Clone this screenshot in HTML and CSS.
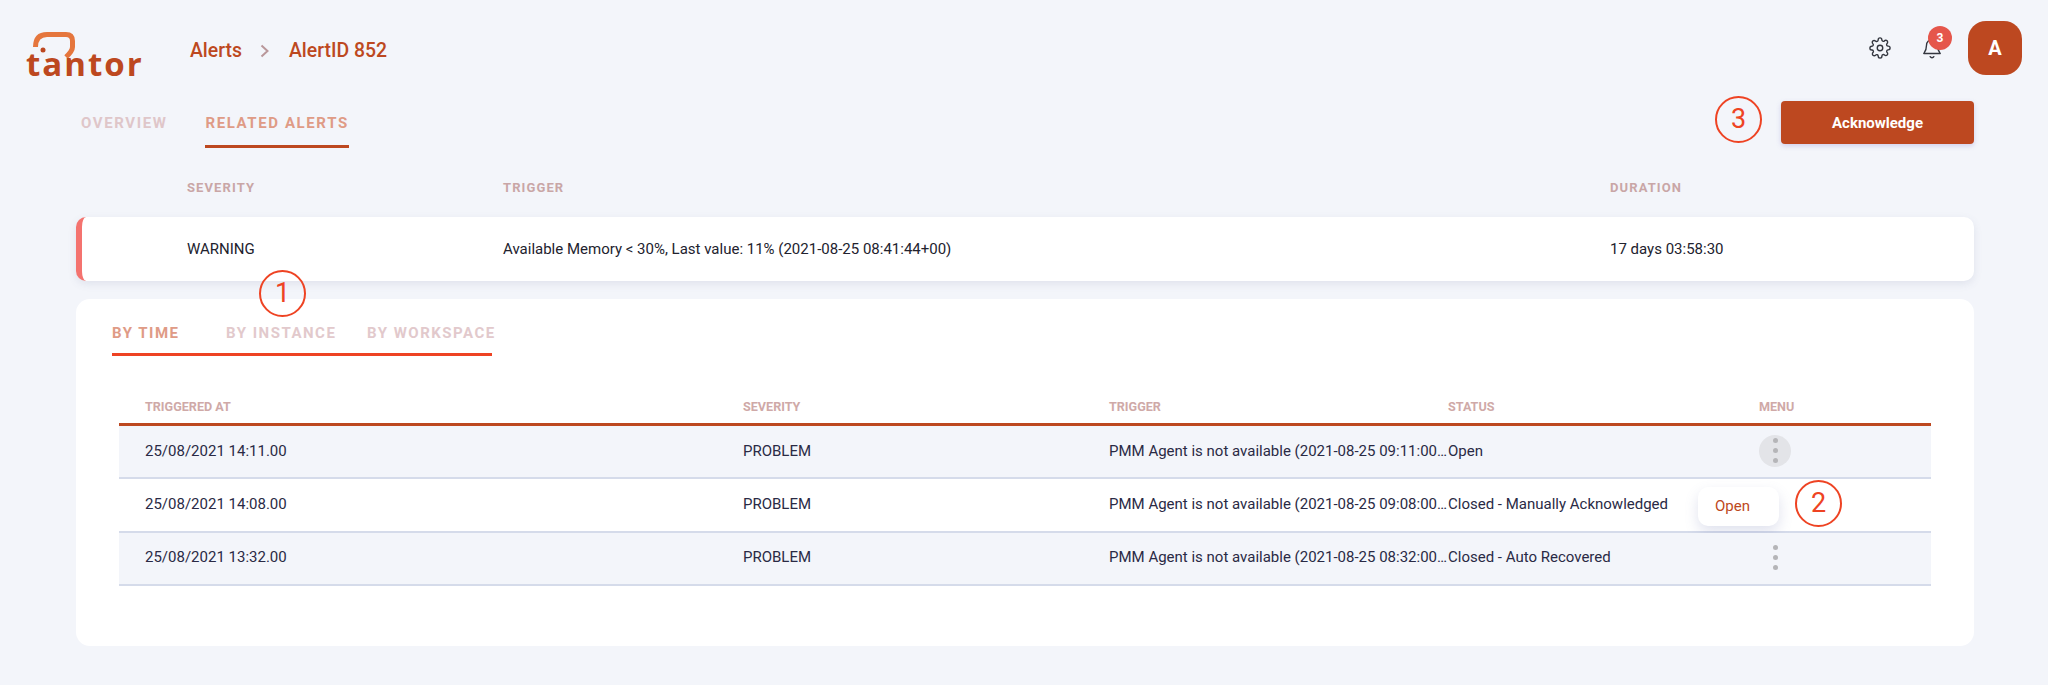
FILE: index.html
```html
<!DOCTYPE html>
<html lang="en">
<head>
<meta charset="utf-8">
<title>AlertID 852</title>
<link rel="stylesheet" href="styles.css">
</head>
<body>
<header class="topbar">
  <div class="logo">
    <svg class="logo-mark" width="64" height="36" viewBox="0 0 64 36"><path d="M7.500 22 Q7.500 9.500 19 9.500 H38 Q44.500 9.500 44.500 16 V22 Q44.500 26 38 32" fill="none" stroke="#e5763d" stroke-width="5"/><circle cx="15" cy="25" r="2.500" fill="#bd4820"/></svg>
    <span class="logo-text">tantor</span>
  </div>
  <nav class="crumbs">
    <span>Alerts</span>
    <svg class="crumb-sep" width="10" height="14" viewBox="0 0 10 14"><path d="M1.500 1.500 L7.500 7 L1.500 12.500" fill="none" stroke="#b9979a" stroke-width="2"/></svg>
    <span>AlertID 852</span>
  </nav>
  <div class="top-actions">
    <svg class="icon" width="22" height="22" viewBox="0 0 24 24" fill="none" stroke="#33363f" stroke-width="1.500" stroke-linecap="round" stroke-linejoin="round"><circle cx="12" cy="12" r="3"/><path d="M19.400 15a1.650 1.650 0 0 0 .33 1.820l.06.06a2 2 0 1 1-2.830 2.830l-.06-.06a1.650 1.650 0 0 0-2.820 1.170V21a2 2 0 1 1-4 0v-.09a1.650 1.650 0 0 0-2.870-1.110l-.06.06a2 2 0 1 1-2.830-2.830l.06-.06a1.650 1.650 0 0 0-1.170-2.820H3a2 2 0 1 1 0-4h.09a1.650 1.650 0 0 0 1.110-2.870l-.06-.06a2 2 0 1 1 2.830-2.830l.06.06a1.650 1.650 0 0 0 1.820.33H9a1.650 1.650 0 0 0 1-1.510V3a2 2 0 1 1 4 0v.09a1.650 1.650 0 0 0 2.820 1.170l.06-.06a2 2 0 1 1 2.830 2.830l-.06.06a1.650 1.650 0 0 0-.33 1.820V9a1.650 1.650 0 0 0 1.510 1H21a2 2 0 1 1 0 4h-.09a1.650 1.650 0 0 0-1.510 1z"/></svg>
    <div class="bell">
      <svg class="icon" width="22" height="22" viewBox="0 0 24 24" fill="none" stroke="#33363f" stroke-width="1.500" stroke-linecap="round" stroke-linejoin="round"><path d="M18 9a6 6 0 0 0-12 0c0 6-2.500 8-3 9h18c-.5-1-3-3-3-9"/><path d="M10 21.500a2.300 2.300 0 0 0 4 0"/></svg>
      <span class="badge">3</span>
    </div>
    <div class="avatar">A</div>
  </div>
</header>

<section class="toolbar">
  <div class="page-tabs">
    <span class="tab">OVERVIEW</span>
    <span class="tab tab-active">RELATED ALERTS</span>
  </div>
  <div class="ack">
    <span class="marker">3</span>
    <button class="ack-btn">Acknowledge</button>
  </div>
</section>

<div class="summary summary-head">
  <span>SEVERITY</span><span>TRIGGER</span><span>DURATION</span>
</div>
<div class="summary summary-card">
  <span>WARNING</span>
  <span>Available Memory &lt; 30%, Last value: 11% (2021-08-25 08:41:44+00)</span>
  <span>17 days 03:58:30</span>
</div>

<main class="panel">
  <span class="marker marker-one">1</span>
  <div class="sub-tabs">
    <span class="sub-tab sub-tab-active">BY TIME</span>
    <span class="sub-tab sub-tab-mid">BY INSTANCE</span>
    <span class="sub-tab">BY WORKSPACE</span>
  </div>
  <div class="table">
    <div class="row row-head">
      <span>TRIGGERED AT</span><span>SEVERITY</span><span>TRIGGER</span><span>STATUS</span><span class="menu-head">MENU</span>
    </div>
    <div class="row row-alt">
      <span>25/08/2021 14:11.00</span><span>PROBLEM</span><span class="clip">PMM Agent is not available (2021-08-25 09:11:00+00)</span><span>Open</span>
      <span class="menu-cell"><span class="dots dots-on"><i></i><i></i><i></i></span></span>
    </div>
    <div class="row">
      <span>25/08/2021 14:08.00</span><span>PROBLEM</span><span class="clip">PMM Agent is not available (2021-08-25 09:08:00+00)</span><span>Closed - Manually Acknowledged</span>
      <span class="menu-cell"></span>
      <div class="popup">Open</div>
      <span class="marker marker-two">2</span>
    </div>
    <div class="row row-alt">
      <span>25/08/2021 13:32.00</span><span>PROBLEM</span><span class="clip">PMM Agent is not available (2021-08-25 08:32:00+00)</span><span>Closed - Auto Recovered</span>
      <span class="menu-cell"><span class="dots"><i></i><i></i><i></i></span></span>
    </div>
  </div>
</main>
</body>
</html>
```

FILE: styles.css
```css
* { box-sizing: border-box; }
html, body { height: 100%; }
body {
  margin: 0;
  background: #f3f5fa;
  font-family: Roboto, "Liberation Sans", sans-serif;
  color: #2a2a45;
  overflow: hidden;
}
.topbar {
  display: flex;
  align-items: center;
  height: 96px;
  padding: 0 26px 0 27px;
}
.logo {
  position: relative;
  width: 114px;
  height: 50px;
  flex: none;
  margin-top: 5px;
}
.logo-mark { position: absolute; left: 1px; top: -1px; }
.logo-text {
  position: absolute;
  left: -1px;
  bottom: -8px;
  font-family: "Open Sans", sans-serif;
  font-weight: 700;
  font-size: 33px;
  line-height: 40px;
  letter-spacing: 2px;
  color: #bd4820;
}
.crumbs {
  display: flex;
  align-items: center;
  margin-left: 49px;
  padding-top: 4px;
  font-size: 19.400px;
  font-weight: 500;
  color: #bd4820;
}
.crumb-sep { margin: 2px 19px 0 18px; }
.top-actions {
  display: flex;
  align-items: center;
  margin-left: auto;
}
.icon { display: block; }
.bell { position: relative; margin-left: 30px; margin-right: 25px; }
.badge {
  position: absolute;
  left: 7px;
  top: -11px;
  width: 24px;
  height: 24px;
  border-radius: 50%;
  background: #e5564b;
  color: #fff;
  font-size: 12px;
  font-weight: 700;
  line-height: 24px;
  text-align: center;
}
.avatar {
  width: 54px;
  height: 54px;
  border-radius: 18px;
  background: #bd4820;
  color: #fff;
  font-size: 20px;
  font-weight: 700;
  line-height: 54px;
  text-align: center;
}
.toolbar {
  display: flex;
  justify-content: space-between;
  padding: 0 74px 0 81px;
  height: 56px;
}
.page-tabs { display: flex; gap: 38px; margin-top: 5px; }
.tab {
  height: 47px;
  padding-top: 14px;
  font-size: 15px;
  font-weight: 700;
  line-height: 16px;
  letter-spacing: 1.600px;
  color: #dfc6c9;
}
.tab-active {
  color: #df9b86;
  border-bottom: 3px solid #bd4820;
}
.ack { display: flex; align-items: flex-start; gap: 19px; }
.marker {
  display: block;
  width: 47px;
  height: 47px;
  border: 2.500px solid #ee4323;
  border-radius: 50%;
  color: #ee4323;
  font-size: 27px;
  font-weight: 400;
  line-height: 42px;
  text-align: center;
  flex: none;
  background: transparent;
}
.ack-btn {
  width: 193px;
  height: 43px;
  margin-top: 5px;
  border: 0;
  border-radius: 4px;
  background: #bd4820;
  box-shadow: 0 2px 5px rgba(110, 100, 200, .25);
  color: #fff;
  font-family: inherit;
  font-size: 15px;
  font-weight: 700;
}
.summary {
  display: grid;
  grid-template-columns: 316px 1107px 1fr;
  margin: 0 74px 0 76px;
  padding-left: 111px;
}
.summary-head {
  height: 65px;
  padding-top: 28px;
  font-size: 13px;
  font-weight: 700;
  line-height: 16px;
  letter-spacing: 1.100px;
  color: #c9a6a6;
}
.summary-card {
  height: 64px;
  align-items: center;
  background: #fff;
  border-radius: 10px;
  border-left: 6px solid #f4736f;
  padding-left: 105px;
  font-size: 15px;
  color: #22222e;
  box-shadow: 0 3px 8px rgba(90, 100, 140, .12);
}
.panel {
  position: relative;
  margin: 18px 74px 0 76px;
  height: 347px;
  padding: 24px 43px 0 36px;
  background: #fff;
  border-radius: 14px;
}
.marker-one { position: absolute; left: 183px; top: -29px; }
.sub-tabs {
  display: flex;
  width: 380px;
  height: 33px;
  padding-top: 2px;
  border-bottom: 3px solid #ee4323;
  font-size: 15px;
  font-weight: 700;
  line-height: 16px;
  letter-spacing: 1.500px;
  color: #e2c9cc;
}
.sub-tab { flex: none; white-space: nowrap; }
.sub-tab-mid { width: 141px; }
.sub-tab-active { width: 114px; color: #df9b86; }
.table { margin: 44px 0 0 7px; position: relative; }
.row {
  position: relative;
  display: grid;
  grid-template-columns: 598px 366px 339px 311px 1fr;
  align-items: center;
  height: 53.400px;
  padding: 0 0 2px 26px;
  font-size: 15px;
  border-bottom: 2px solid #d5dbea;
  white-space: nowrap;
}
.row-alt { background: #f3f5fa; }
.row-head {
  height: 26px;
  padding-bottom: 0;
  align-items: start;
  background: #fff;
  border-bottom: 3px solid #bd4820;
  font-size: 12.600px;
  font-weight: 700;
  line-height: 14px;
  color: #cfa9a7;
}
.clip { overflow: hidden; text-overflow: ellipsis; }
.menu-head { grid-column: 5; }
.menu-cell { display: flex; }
.dots {
  display: flex;
  flex-direction: column;
  align-items: center;
  justify-content: center;
  gap: 5px;
  width: 32px;
  height: 32px;
  border-radius: 50%;
}
.dots i {
  display: block;
  width: 5px;
  height: 5px;
  border-radius: 50%;
  background: #b5b5b8;
}
.dots-on { background: #e3e4e8; }
.popup {
  position: absolute;
  left: 1579px;
  top: 8px;
  width: 81px;
  height: 39px;
  padding-left: 17px;
  border-radius: 10px;
  background: #fff;
  box-shadow: 0 6px 14px rgba(100, 110, 170, .2);
  color: #bd4820;
  line-height: 39px;
}
.marker-two { position: absolute; left: 1676px; top: 1px; }
```
